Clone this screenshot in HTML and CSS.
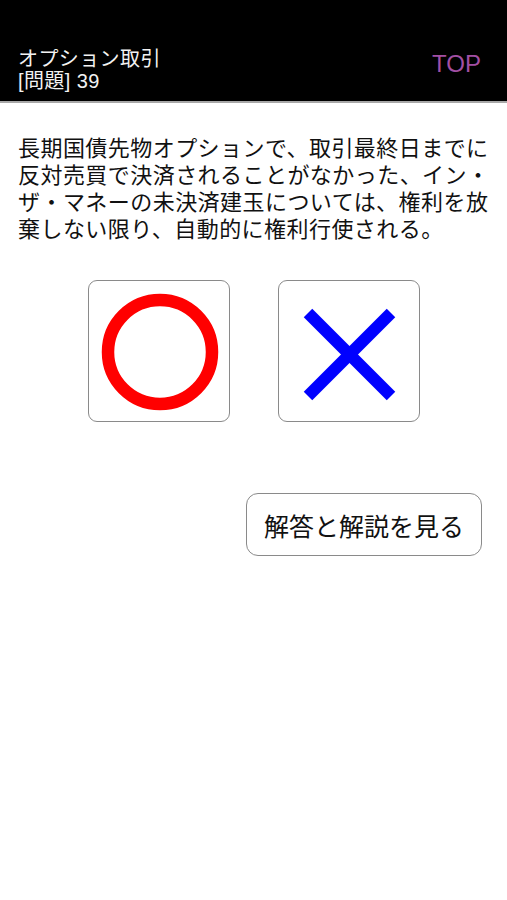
FILE: index.html
```html
<!DOCTYPE html>
<html lang="ja">
<head>
<meta charset="UTF-8">
<meta name="viewport" content="width=device-width, initial-scale=1.0">
<title>オプション取引 問題39</title>
<link rel="stylesheet" href="styles.css">
</head>
<body>
<div class="header">
  <div class="title">
    <div>オプション取引</div>
    <div>[問題] 39</div>
  </div>
  <a class="top-link" href="#">TOP</a>
</div>

<div class="content">
  <p class="question">長期国債先物オプションで、取引最終日までに反対売買で決済されることがなかった、イン・ザ・マネーの未決済建玉については、権利を放棄しない限り、自動的に権利行使される。</p>

  <div class="choices">
    <button class="choice" onclick="answer(true)">
      <svg width="140" height="140" viewBox="0 0 140 140">
        <circle cx="71" cy="71" r="52" fill="none" stroke="#ff0000" stroke-width="12.5"/>
      </svg>
    </button>
    <button class="choice" onclick="answer(false)">
      <svg width="140" height="140" viewBox="0 0 140 140">
        <line x1="29" y1="32" x2="112" y2="115" stroke="#0000ff" stroke-width="12"/>
        <line x1="112" y1="32" x2="29" y2="115" stroke="#0000ff" stroke-width="12"/>
      </svg>
    </button>
  </div>

  <div class="actions">
    <button class="show-answer">解答と解説を見る</button>
  </div>
</div>

<script>
function answer(choice) {
  // 正解は○
  alert(choice ? '正解' : '不正解');
}
</script>
</body>
</html>
```

FILE: styles.css
```css
body {
  margin: 0;
  background: #fff;
  font-family: "Liberation Sans", "Noto Sans CJK JP", sans-serif;
  color: #000;
}
.header {
  height: 103px;
  box-sizing: border-box;
  background: #000;
  border-bottom: 2px solid #a8a8a8;
  display: flex;
  align-items: flex-end;
  justify-content: space-between;
  padding: 0 26px 9px 18px;
}
.title {
  color: #f2f2f2;
  font-size: 20px;
  line-height: 22px;
  letter-spacing: 0.4px;
}
.top-link {
  color: #a24fa3;
  font-size: 24px;
  text-decoration: none;
  margin-bottom: 14px;
}
.content {
  padding: 0 14px 0 18px;
}
.question {
  margin: 30px 0 0;
  font-size: 22px;
  letter-spacing: 0.45px;
  line-height: 27px;
  font-family: "Noto Sans CJK JP", sans-serif;
  color: #111;
}
.choices {
  display: flex;
  justify-content: center;
  gap: 48px;
  margin-top: 39px;
  margin-right: 4px;
}
.choice {
  width: 142px;
  height: 142px;
  padding: 0;
  background: #fff;
  border: 1.5px solid #8a8a8a;
  border-radius: 9px;
  display: flex;
  align-items: center;
  justify-content: center;
}
.actions {
  display: flex;
  justify-content: flex-end;
  margin-top: 71px;
  padding-right: 11px;
}
.show-answer {
  width: 236px;
  height: 63px;
  background: #fff;
  border: 1.5px solid #8a8a8a;
  border-radius: 12px;
  font-family: "Noto Sans CJK JP", sans-serif;
  font-size: 25px;
  color: #111;
  padding: 0;
}
```
